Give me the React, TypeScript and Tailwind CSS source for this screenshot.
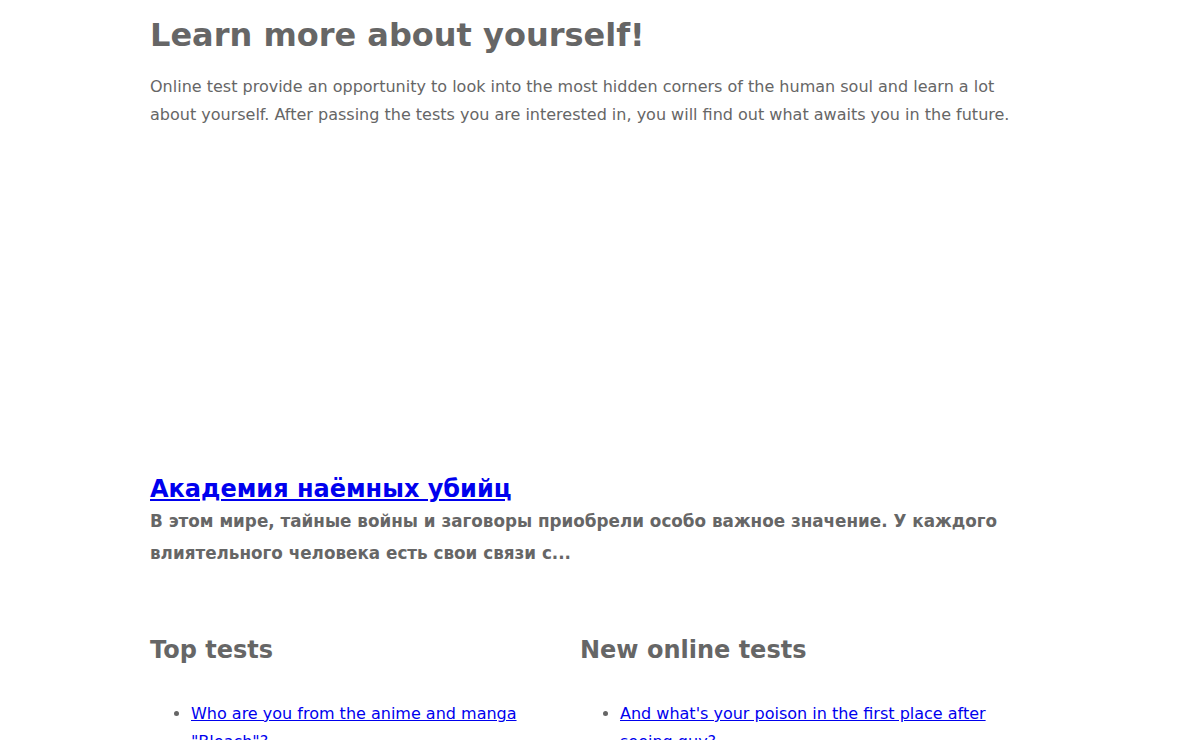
import React from "react";

export default function App() {
  return (
    <div className="w-[1200px] min-h-[740px] bg-white text-[#666666] font-['DejaVu_Sans',Verdana,sans-serif]">
      <div className="w-[870px] ml-[150px]">
        <h1 className="text-[32px] font-bold leading-[40px] pt-[15px]">Learn more about yourself!</h1>
        <p className="text-[16px] leading-[28px] mt-[18px]">
          Online test provide an opportunity to look into the most hidden corners of the human soul and learn a lot about yourself. After passing the tests you are interested in, you will find out what awaits you in the future.
        </p>
        <div className="h-[345px]" />
        <h2 className="text-[24px] font-bold leading-[30px]">
          <a href="#" className="text-[#0000ee] underline">Академия наёмных убийц</a>
        </h2>
        <p className="text-[16.8px] font-bold leading-[32px] mt-[1px]">
          В этом мире, тайные войны и заговоры приобрели особо важное значение. У каждого влиятельного человека есть свои связи с...
        </p>
        <div className="grid grid-cols-[430px_1fr] mt-[66px]">
          <div>
            <h2 className="text-[24px] font-bold leading-[30px]">Top tests</h2>
            <ul className="list-disc pl-[41px] mt-[35px] leading-[28px] text-[16px] marker:text-[#666666]">
              <li><a href="#" className="text-[#0000ee] underline">Who are you from the anime and manga "Bleach"?</a></li>
            </ul>
          </div>
          <div>
            <h2 className="text-[24px] font-bold leading-[30px]">New online tests</h2>
            <ul className="list-disc pl-[40px] mt-[35px] leading-[28px] text-[16px] marker:text-[#666666]">
              <li><a href="#" className="text-[#0000ee] underline">And what's your poison in the first place after seeing guy?</a></li>
            </ul>
          </div>
        </div>
      </div>
    </div>
  );
}
